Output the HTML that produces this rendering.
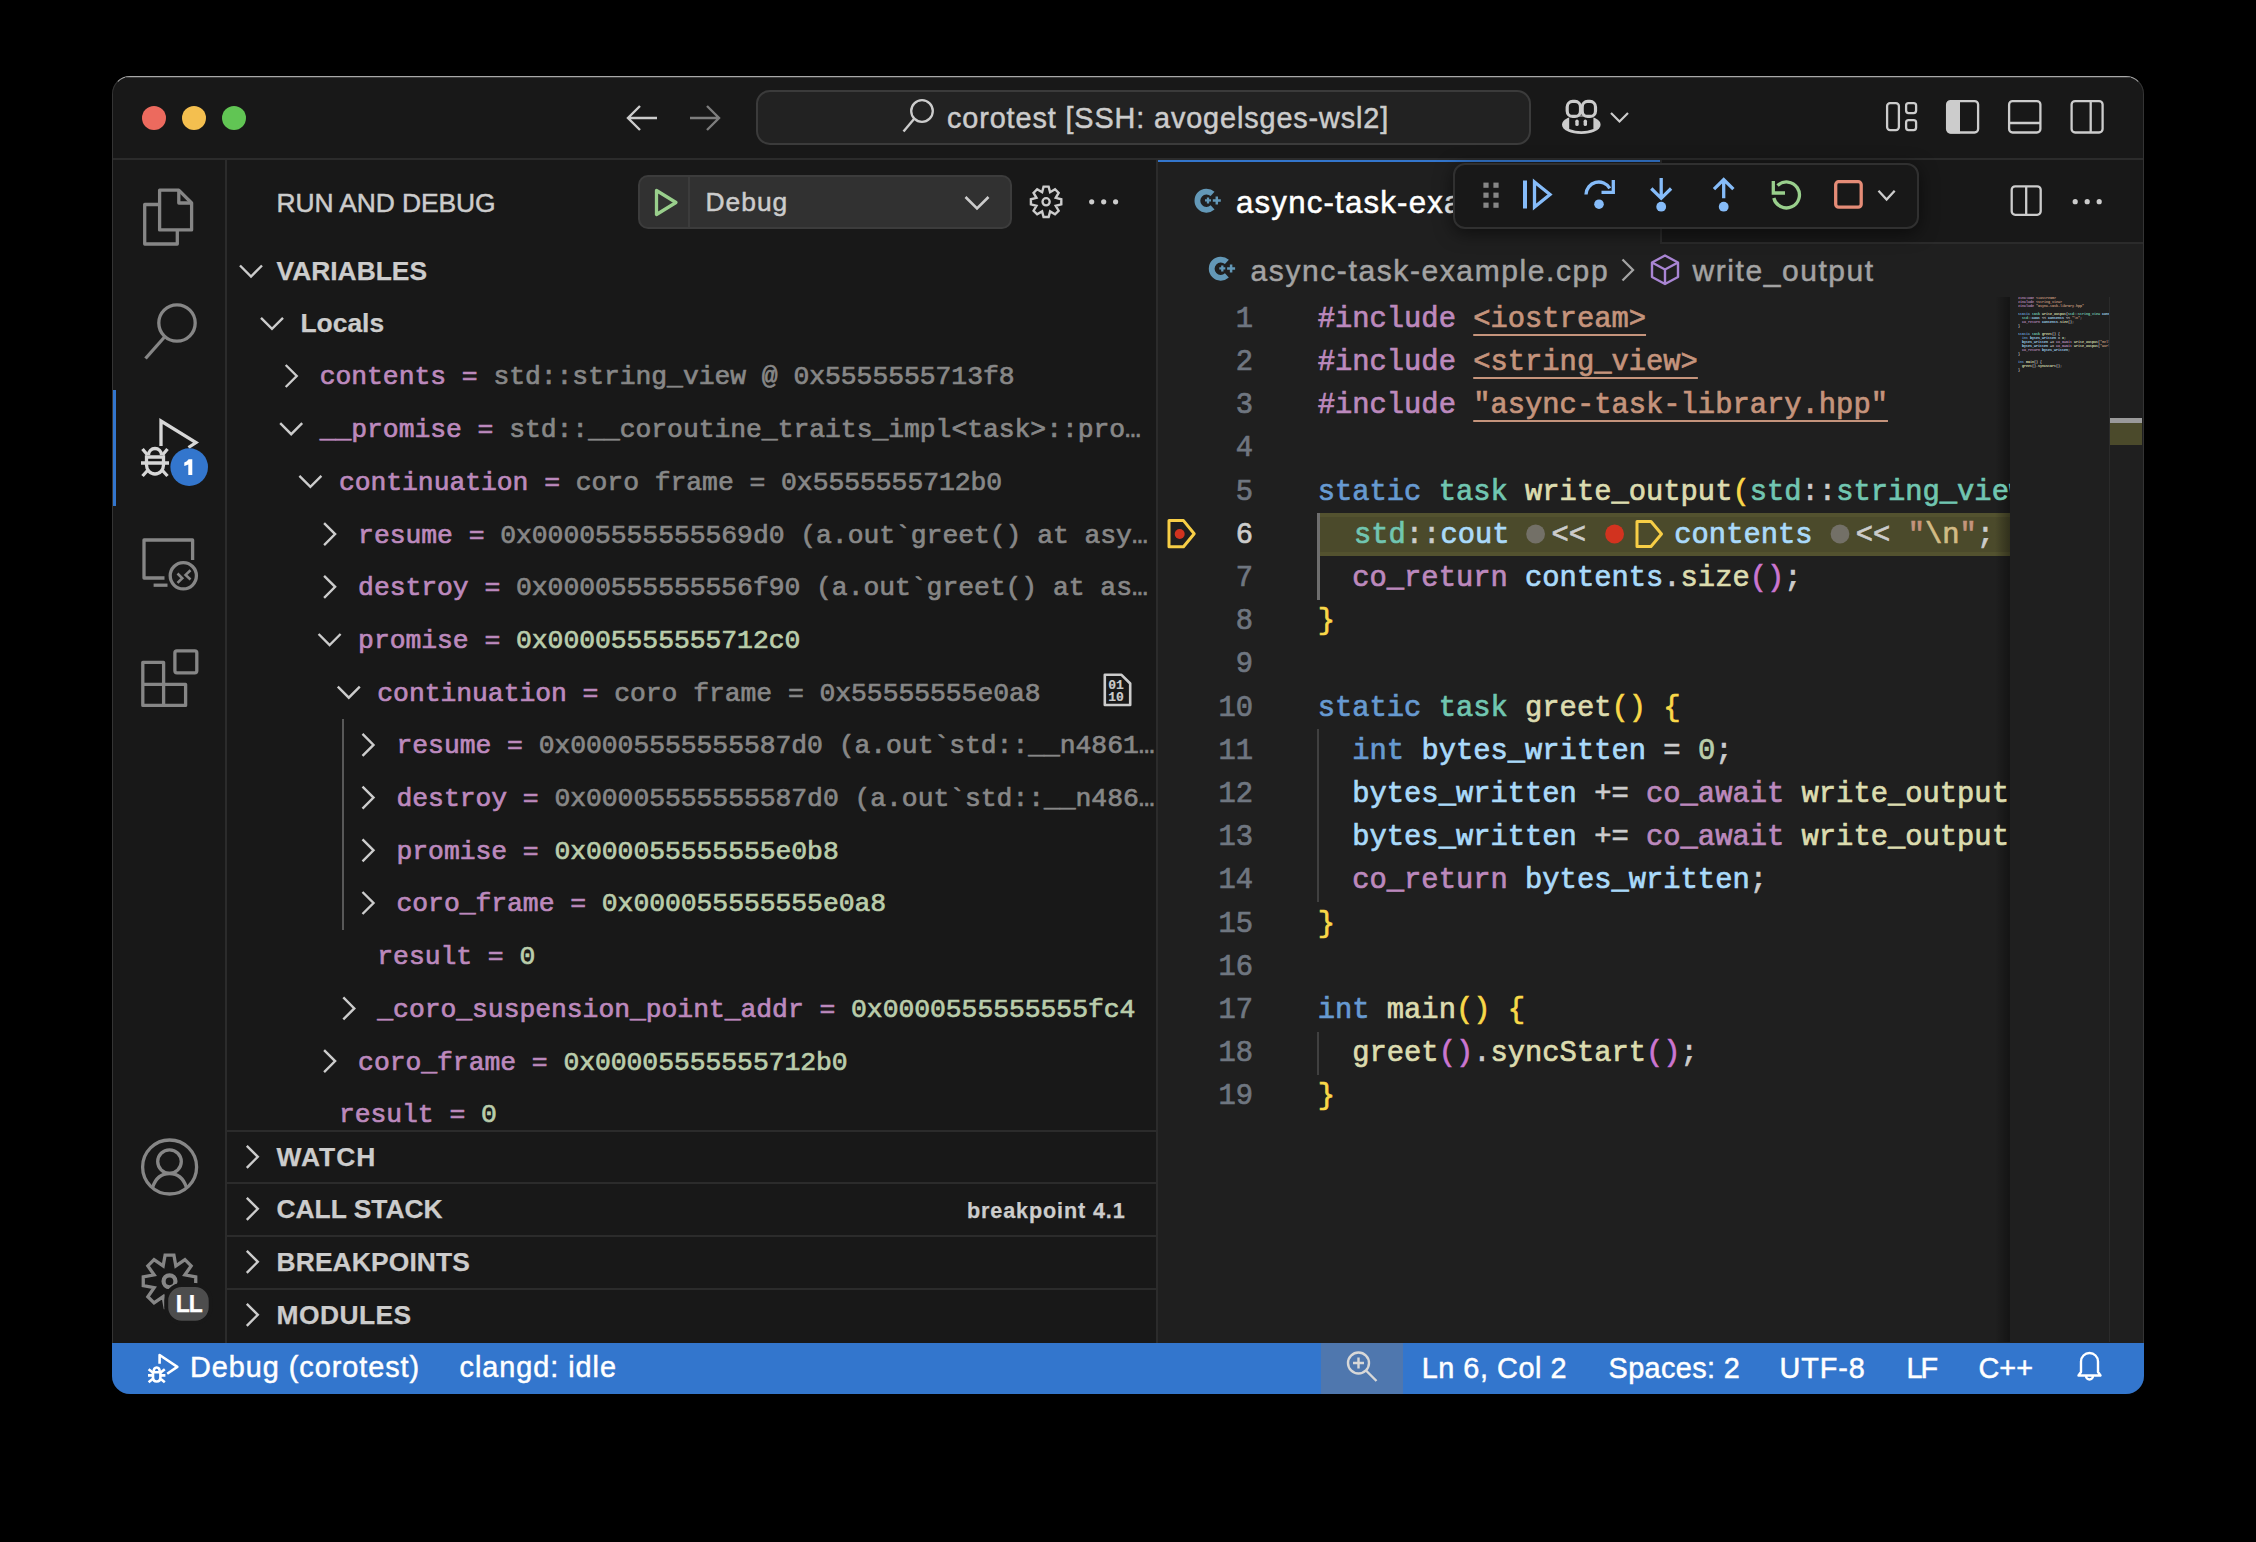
<!DOCTYPE html>
<html><head><meta charset="utf-8"><title>VS Code</title>
<style>html,body{margin:0;padding:0;background:#000;} body{width:2256px;height:1542px;position:relative;overflow:hidden;}</style></head>
<body>
<div style="position:absolute;left:0;top:0;width:2256px;height:1542px;clip-path:inset(76px 112px 148px 112px round 18px)">
<div style="position:absolute;left:112px;top:76px;width:2032px;height:1318px;background:#181818"></div><div style="position:absolute;left:112px;top:158px;width:2032px;height:2px;background:#2b2b2b"></div><div style="position:absolute;left:225px;top:160px;width:2px;height:1183px;background:#2b2b2b"></div><div style="position:absolute;left:1156px;top:160px;width:2px;height:1183px;background:#2b2b2b"></div><div style="position:absolute;left:755.5px;top:89.5px;width:771px;height:51px;background:#222222;border:2px solid #3b3b3b;border-radius:14px"></div><div style="position:absolute;left:112px;top:390px;width:4px;height:115.5px;background:#3376cd"></div><div style="position:absolute;left:638px;top:175px;width:370px;height:50px;background:#313131;border:2px solid #3c3c3c;border-radius:10px;box-sizing:content-box"></div><div style="position:absolute;left:688px;top:177px;width:2px;height:50px;background:#3c3c3c"></div><div style="position:absolute;left:341.8px;top:718.6px;width:2px;height:211.7px;background:#585858"></div><div style="position:absolute;left:227px;top:1130px;width:929px;height:2px;background:#2b2b2b"></div><div style="position:absolute;left:227px;top:1182px;width:929px;height:2px;background:#2b2b2b"></div><div style="position:absolute;left:227px;top:1235px;width:929px;height:2px;background:#2b2b2b"></div><div style="position:absolute;left:227px;top:1288px;width:929px;height:2px;background:#2b2b2b"></div><div style="position:absolute;left:1158px;top:160px;width:985px;height:1183px;background:#1f1f1f"></div><div style="position:absolute;left:1158px;top:160px;width:985px;height:83px;background:#181818"></div><div style="position:absolute;left:1662px;top:242px;width:481px;height:2px;background:#2b2b2b"></div><div style="position:absolute;left:1158px;top:160px;width:502px;height:84px;background:#1f1f1f"></div><div style="position:absolute;left:1158px;top:160px;width:502px;height:2px;background:#3376cd"></div><div style="position:absolute;left:1660px;top:160px;width:2px;height:84px;background:#2b2b2b"></div><div style="position:absolute;left:1317px;top:513.3px;width:693px;height:43.2px;background:#4b4a2b;box-shadow:inset 0 4px 0 #53522f, inset 0 -4px 0 #53522f"></div><div style="position:absolute;left:1317px;top:513.3px;width:3px;height:86.4px;background:#6e6e6e"></div><div style="position:absolute;left:1317px;top:729.3px;width:2px;height:172.8px;background:#404040"></div><div style="position:absolute;left:1317px;top:1031.7px;width:2px;height:43.2px;background:#404040"></div><div style="position:absolute;left:1995px;top:297px;width:15px;height:1045px;background:linear-gradient(to right, rgba(0,0,0,0), rgba(0,0,0,0.35))"></div><div style="position:absolute;left:2109px;top:297px;width:1px;height:1045px;background:#2b2b2b"></div><div style="position:absolute;left:2110px;top:418px;width:32px;height:4.5px;background:#9a9a9a"></div><div style="position:absolute;left:2110px;top:422.5px;width:32px;height:22.5px;background:#4b4a2b"></div><div style="position:absolute;left:112px;top:1342.5px;width:2032px;height:51.5px;background:#3376cd"></div><div style="position:absolute;left:1321px;top:1342.5px;width:82px;height:51.5px;background:#4f77ae"></div>
<div style="position:absolute;left:947px;top:99.92px;font-family:'Liberation Sans', sans-serif;font-size:28.8px;line-height:36.0px;font-weight:400;color:#cccccc;letter-spacing:0.89px;white-space:pre;-webkit-text-stroke:0.5px currentColor;">corotest [SSH: avogelsges-wsl2]</div><div style="position:absolute;left:276.5px;top:187.15px;font-family:'Liberation Sans', sans-serif;font-size:26.4px;line-height:33.0px;font-weight:400;color:#cccccc;letter-spacing:-0.08px;white-space:pre;-webkit-text-stroke:0.5px currentColor;">RUN AND DEBUG</div><div style="position:absolute;left:705.5px;top:186.15px;font-family:'Liberation Sans', sans-serif;font-size:26.4px;line-height:33.0px;font-weight:400;color:#cccccc;letter-spacing:1.0px;white-space:pre;-webkit-text-stroke:0.5px currentColor;">Debug</div><div style="position:absolute;left:276.5px;top:254.55px;font-family:'Liberation Sans', sans-serif;font-size:26.4px;line-height:33.0px;font-weight:700;color:#cccccc;letter-spacing:0px;white-space:pre;-webkit-text-stroke:0.25px currentColor;">VARIABLES</div><div style="position:absolute;left:300.5px;top:306.65px;font-family:'Liberation Sans', sans-serif;font-size:26.4px;line-height:33.0px;font-weight:700;color:#cccccc;letter-spacing:0px;white-space:pre;-webkit-text-stroke:0.25px currentColor;">Locals</div><div style="position:absolute;left:319.7px;top:361.47px;font-family:'Liberation Mono', monospace;font-size:26.4px;line-height:33.0px;font-weight:400;color:#cccccc;letter-spacing:-0.045px;white-space:pre;-webkit-text-stroke:0.7px currentColor;"><span style="color:#bc89bd">contents =</span> <span style="color:#878787">std::string_view @ 0x5555555713f8</span></div><div style="position:absolute;left:319.7px;top:414.17px;font-family:'Liberation Mono', monospace;font-size:26.4px;line-height:33.0px;font-weight:400;color:#cccccc;letter-spacing:-0.045px;white-space:pre;-webkit-text-stroke:0.7px currentColor;"><span style="color:#bc89bd">__promise =</span> <span style="color:#878787">std::__coroutine_traits_impl&lt;task&gt;::pro…</span></div><div style="position:absolute;left:338.9px;top:466.87px;font-family:'Liberation Mono', monospace;font-size:26.4px;line-height:33.0px;font-weight:400;color:#cccccc;letter-spacing:-0.045px;white-space:pre;-webkit-text-stroke:0.7px currentColor;"><span style="color:#bc89bd">continuation =</span> <span style="color:#878787">coro frame = 0x5555555712b0</span></div><div style="position:absolute;left:358.1px;top:519.57px;font-family:'Liberation Mono', monospace;font-size:26.4px;line-height:33.0px;font-weight:400;color:#cccccc;letter-spacing:-0.045px;white-space:pre;-webkit-text-stroke:0.7px currentColor;"><span style="color:#bc89bd">resume =</span> <span style="color:#878787">0x00005555555569d0 (a.out`greet() at asy…</span></div><div style="position:absolute;left:358.1px;top:572.27px;font-family:'Liberation Mono', monospace;font-size:26.4px;line-height:33.0px;font-weight:400;color:#cccccc;letter-spacing:-0.045px;white-space:pre;-webkit-text-stroke:0.7px currentColor;"><span style="color:#bc89bd">destroy =</span> <span style="color:#878787">0x0000555555556f90 (a.out`greet() at as…</span></div><div style="position:absolute;left:358.1px;top:624.97px;font-family:'Liberation Mono', monospace;font-size:26.4px;line-height:33.0px;font-weight:400;color:#cccccc;letter-spacing:-0.045px;white-space:pre;-webkit-text-stroke:0.7px currentColor;"><span style="color:#bc89bd">promise =</span> <span style="color:#bacdab">0x00005555555712c0</span></div><div style="position:absolute;left:377.3px;top:677.67px;font-family:'Liberation Mono', monospace;font-size:26.4px;line-height:33.0px;font-weight:400;color:#cccccc;letter-spacing:-0.045px;white-space:pre;-webkit-text-stroke:0.7px currentColor;"><span style="color:#bc89bd">continuation =</span> <span style="color:#878787">coro frame = 0x55555555e0a8</span></div><div style="position:absolute;left:396.5px;top:730.37px;font-family:'Liberation Mono', monospace;font-size:26.4px;line-height:33.0px;font-weight:400;color:#cccccc;letter-spacing:-0.045px;white-space:pre;-webkit-text-stroke:0.7px currentColor;"><span style="color:#bc89bd">resume =</span> <span style="color:#878787">0x00005555555587d0 (a.out`std::__n4861…</span></div><div style="position:absolute;left:396.5px;top:783.07px;font-family:'Liberation Mono', monospace;font-size:26.4px;line-height:33.0px;font-weight:400;color:#cccccc;letter-spacing:-0.045px;white-space:pre;-webkit-text-stroke:0.7px currentColor;"><span style="color:#bc89bd">destroy =</span> <span style="color:#878787">0x00005555555587d0 (a.out`std::__n486…</span></div><div style="position:absolute;left:396.5px;top:835.77px;font-family:'Liberation Mono', monospace;font-size:26.4px;line-height:33.0px;font-weight:400;color:#cccccc;letter-spacing:-0.045px;white-space:pre;-webkit-text-stroke:0.7px currentColor;"><span style="color:#bc89bd">promise =</span> <span style="color:#bacdab">0x000055555555e0b8</span></div><div style="position:absolute;left:396.5px;top:888.47px;font-family:'Liberation Mono', monospace;font-size:26.4px;line-height:33.0px;font-weight:400;color:#cccccc;letter-spacing:-0.045px;white-space:pre;-webkit-text-stroke:0.7px currentColor;"><span style="color:#bc89bd">coro_frame =</span> <span style="color:#bacdab">0x000055555555e0a8</span></div><div style="position:absolute;left:377.3px;top:941.17px;font-family:'Liberation Mono', monospace;font-size:26.4px;line-height:33.0px;font-weight:400;color:#cccccc;letter-spacing:-0.045px;white-space:pre;-webkit-text-stroke:0.7px currentColor;"><span style="color:#bc89bd">result =</span> <span style="color:#bacdab">0</span></div><div style="position:absolute;left:377.3px;top:993.87px;font-family:'Liberation Mono', monospace;font-size:26.4px;line-height:33.0px;font-weight:400;color:#cccccc;letter-spacing:-0.045px;white-space:pre;-webkit-text-stroke:0.7px currentColor;"><span style="color:#bc89bd">_coro_suspension_point_addr =</span> <span style="color:#bacdab">0x0000555555555fc4</span></div><div style="position:absolute;left:358.1px;top:1046.57px;font-family:'Liberation Mono', monospace;font-size:26.4px;line-height:33.0px;font-weight:400;color:#cccccc;letter-spacing:-0.045px;white-space:pre;-webkit-text-stroke:0.7px currentColor;"><span style="color:#bc89bd">coro_frame =</span> <span style="color:#bacdab">0x00005555555712b0</span></div><div style="position:absolute;left:338.9px;top:1099.27px;font-family:'Liberation Mono', monospace;font-size:26.4px;line-height:33.0px;font-weight:400;color:#cccccc;letter-spacing:-0.045px;white-space:pre;-webkit-text-stroke:0.7px currentColor;"><span style="color:#bc89bd">result =</span> <span style="color:#bacdab">0</span></div><div style="position:absolute;left:1108.3px;top:678.02px;font-family:'Liberation Mono', monospace;font-size:13px;line-height:16.25px;font-weight:700;color:#cccccc;letter-spacing:0px;white-space:pre;-webkit-text-stroke:0.2px currentColor;">01</div><div style="position:absolute;left:1108.3px;top:690.12px;font-family:'Liberation Mono', monospace;font-size:13px;line-height:16.25px;font-weight:700;color:#cccccc;letter-spacing:0px;white-space:pre;-webkit-text-stroke:0.2px currentColor;">10</div><div style="position:absolute;left:276.5px;top:1141.35px;font-family:'Liberation Sans', sans-serif;font-size:26.4px;line-height:33.0px;font-weight:700;color:#cccccc;letter-spacing:1.0px;white-space:pre;-webkit-text-stroke:0.25px currentColor;">WATCH</div><div style="position:absolute;left:276.5px;top:1193.35px;font-family:'Liberation Sans', sans-serif;font-size:26.4px;line-height:33.0px;font-weight:700;color:#cccccc;letter-spacing:0px;white-space:pre;-webkit-text-stroke:0.25px currentColor;">CALL STACK</div><div style="position:absolute;left:276.5px;top:1246.35px;font-family:'Liberation Sans', sans-serif;font-size:26.4px;line-height:33.0px;font-weight:700;color:#cccccc;letter-spacing:0.13px;white-space:pre;-webkit-text-stroke:0.25px currentColor;">BREAKPOINTS</div><div style="position:absolute;left:276.5px;top:1299.35px;font-family:'Liberation Sans', sans-serif;font-size:26.4px;line-height:33.0px;font-weight:700;color:#cccccc;letter-spacing:0.45px;white-space:pre;-webkit-text-stroke:0.25px currentColor;">MODULES</div><div style="position:absolute;left:967px;top:1196.81px;font-family:'Liberation Sans', sans-serif;font-size:21.6px;line-height:27.0px;font-weight:700;color:#cccccc;letter-spacing:0.87px;white-space:pre;-webkit-text-stroke:0.25px currentColor;">breakpoint 4.1</div><div style="position:absolute;left:1236px;top:182.88px;font-family:'Liberation Sans', sans-serif;font-size:31.2px;line-height:39.0px;font-weight:400;color:#ffffff;letter-spacing:1.2px;white-space:pre;-webkit-text-stroke:0.5px currentColor;">async-task-example.cpp</div><div style="position:absolute;left:1250.5px;top:251.55px;font-family:'Liberation Sans', sans-serif;font-size:30px;line-height:37.5px;font-weight:400;color:#a3a3a3;letter-spacing:1.6px;white-space:pre;-webkit-text-stroke:0.5px currentColor;">async-task-example.cpp</div><div style="position:absolute;left:1692.6px;top:251.55px;font-family:'Liberation Sans', sans-serif;font-size:30px;line-height:37.5px;font-weight:400;color:#a3a3a3;letter-spacing:1.55px;white-space:pre;-webkit-text-stroke:0.5px currentColor;">write_output</div><div style="position:absolute;left:1235.72px;top:301.74px;font-family:'Liberation Mono', monospace;font-size:28.8px;line-height:36.0px;font-weight:400;color:#6f7680;letter-spacing:0px;white-space:pre;-webkit-text-stroke:0.7px currentColor;">1</div><div style="position:absolute;left:1235.72px;top:344.94px;font-family:'Liberation Mono', monospace;font-size:28.8px;line-height:36.0px;font-weight:400;color:#6f7680;letter-spacing:0px;white-space:pre;-webkit-text-stroke:0.7px currentColor;">2</div><div style="position:absolute;left:1235.72px;top:388.14px;font-family:'Liberation Mono', monospace;font-size:28.8px;line-height:36.0px;font-weight:400;color:#6f7680;letter-spacing:0px;white-space:pre;-webkit-text-stroke:0.7px currentColor;">3</div><div style="position:absolute;left:1235.72px;top:431.34px;font-family:'Liberation Mono', monospace;font-size:28.8px;line-height:36.0px;font-weight:400;color:#6f7680;letter-spacing:0px;white-space:pre;-webkit-text-stroke:0.7px currentColor;">4</div><div style="position:absolute;left:1235.72px;top:474.54px;font-family:'Liberation Mono', monospace;font-size:28.8px;line-height:36.0px;font-weight:400;color:#6f7680;letter-spacing:0px;white-space:pre;-webkit-text-stroke:0.7px currentColor;">5</div><div style="position:absolute;left:1235.72px;top:517.74px;font-family:'Liberation Mono', monospace;font-size:28.8px;line-height:36.0px;font-weight:400;color:#cccccc;letter-spacing:0px;white-space:pre;-webkit-text-stroke:0.7px currentColor;">6</div><div style="position:absolute;left:1235.72px;top:560.94px;font-family:'Liberation Mono', monospace;font-size:28.8px;line-height:36.0px;font-weight:400;color:#6f7680;letter-spacing:0px;white-space:pre;-webkit-text-stroke:0.7px currentColor;">7</div><div style="position:absolute;left:1235.72px;top:604.14px;font-family:'Liberation Mono', monospace;font-size:28.8px;line-height:36.0px;font-weight:400;color:#6f7680;letter-spacing:0px;white-space:pre;-webkit-text-stroke:0.7px currentColor;">8</div><div style="position:absolute;left:1235.72px;top:647.34px;font-family:'Liberation Mono', monospace;font-size:28.8px;line-height:36.0px;font-weight:400;color:#6f7680;letter-spacing:0px;white-space:pre;-webkit-text-stroke:0.7px currentColor;">9</div><div style="position:absolute;left:1218.44px;top:690.54px;font-family:'Liberation Mono', monospace;font-size:28.8px;line-height:36.0px;font-weight:400;color:#6f7680;letter-spacing:0px;white-space:pre;-webkit-text-stroke:0.7px currentColor;">10</div><div style="position:absolute;left:1218.44px;top:733.74px;font-family:'Liberation Mono', monospace;font-size:28.8px;line-height:36.0px;font-weight:400;color:#6f7680;letter-spacing:0px;white-space:pre;-webkit-text-stroke:0.7px currentColor;">11</div><div style="position:absolute;left:1218.44px;top:776.94px;font-family:'Liberation Mono', monospace;font-size:28.8px;line-height:36.0px;font-weight:400;color:#6f7680;letter-spacing:0px;white-space:pre;-webkit-text-stroke:0.7px currentColor;">12</div><div style="position:absolute;left:1218.44px;top:820.14px;font-family:'Liberation Mono', monospace;font-size:28.8px;line-height:36.0px;font-weight:400;color:#6f7680;letter-spacing:0px;white-space:pre;-webkit-text-stroke:0.7px currentColor;">13</div><div style="position:absolute;left:1218.44px;top:863.34px;font-family:'Liberation Mono', monospace;font-size:28.8px;line-height:36.0px;font-weight:400;color:#6f7680;letter-spacing:0px;white-space:pre;-webkit-text-stroke:0.7px currentColor;">14</div><div style="position:absolute;left:1218.44px;top:906.54px;font-family:'Liberation Mono', monospace;font-size:28.8px;line-height:36.0px;font-weight:400;color:#6f7680;letter-spacing:0px;white-space:pre;-webkit-text-stroke:0.7px currentColor;">15</div><div style="position:absolute;left:1218.44px;top:949.74px;font-family:'Liberation Mono', monospace;font-size:28.8px;line-height:36.0px;font-weight:400;color:#6f7680;letter-spacing:0px;white-space:pre;-webkit-text-stroke:0.7px currentColor;">16</div><div style="position:absolute;left:1218.44px;top:992.94px;font-family:'Liberation Mono', monospace;font-size:28.8px;line-height:36.0px;font-weight:400;color:#6f7680;letter-spacing:0px;white-space:pre;-webkit-text-stroke:0.7px currentColor;">17</div><div style="position:absolute;left:1218.44px;top:1036.14px;font-family:'Liberation Mono', monospace;font-size:28.8px;line-height:36.0px;font-weight:400;color:#6f7680;letter-spacing:0px;white-space:pre;-webkit-text-stroke:0.7px currentColor;">18</div><div style="position:absolute;left:1218.44px;top:1079.34px;font-family:'Liberation Mono', monospace;font-size:28.8px;line-height:36.0px;font-weight:400;color:#6f7680;letter-spacing:0px;white-space:pre;-webkit-text-stroke:0.7px currentColor;">19</div><div style="position:absolute;left:1158px;top:297px;width:852px;height:1045px;overflow:hidden"><div style="position:absolute;left:-1158px;top:-297px;width:2256px;height:1542px"><div style="position:absolute;left:1317.7px;top:301.74px;font-family:'Liberation Mono', monospace;font-size:28.8px;line-height:36.0px;font-weight:400;color:#cccccc;letter-spacing:0px;white-space:pre;-webkit-text-stroke:0.7px currentColor;"><span style="color:#bc89bd;">#include</span><span style="color:#cccccc;"> </span><span style="color:#c5947c;text-decoration:underline;text-underline-offset:7px;text-decoration-thickness:2px;">&lt;iostream&gt;</span></div><div style="position:absolute;left:1317.7px;top:344.94px;font-family:'Liberation Mono', monospace;font-size:28.8px;line-height:36.0px;font-weight:400;color:#cccccc;letter-spacing:0px;white-space:pre;-webkit-text-stroke:0.7px currentColor;"><span style="color:#bc89bd;">#include</span><span style="color:#cccccc;"> </span><span style="color:#c5947c;text-decoration:underline;text-underline-offset:7px;text-decoration-thickness:2px;">&lt;string_view&gt;</span></div><div style="position:absolute;left:1317.7px;top:388.14px;font-family:'Liberation Mono', monospace;font-size:28.8px;line-height:36.0px;font-weight:400;color:#cccccc;letter-spacing:0px;white-space:pre;-webkit-text-stroke:0.7px currentColor;"><span style="color:#bc89bd;">#include</span><span style="color:#cccccc;"> </span><span style="color:#c5947c;text-decoration:underline;text-underline-offset:7px;text-decoration-thickness:2px;">&quot;async-task-library.hpp&quot;</span></div><div style="position:absolute;left:1317.7px;top:474.54px;font-family:'Liberation Mono', monospace;font-size:28.8px;line-height:36.0px;font-weight:400;color:#cccccc;letter-spacing:0px;white-space:pre;-webkit-text-stroke:0.7px currentColor;"><span style="color:#679ad1;">static</span><span style="color:#cccccc;"> </span><span style="color:#71c6b1;">task</span><span style="color:#cccccc;"> </span><span style="color:#dcdcaf;">write_output</span><span style="color:#f9d849;">(</span><span style="color:#71c6b1;">std</span><span style="color:#cccccc;">::</span><span style="color:#71c6b1;">string_view</span><span style="color:#cccccc;"> </span><span style="color:#aadafa;">contents</span><span style="color:#f9d849;">)</span><span style="color:#cccccc;"> </span><span style="color:#f9d849;">{</span></div><div style="position:absolute;left:1317.7px;top:560.94px;font-family:'Liberation Mono', monospace;font-size:28.8px;line-height:36.0px;font-weight:400;color:#cccccc;letter-spacing:0px;white-space:pre;-webkit-text-stroke:0.7px currentColor;"><span style="color:#cccccc;">  </span><span style="color:#bc89bd;">co_return</span><span style="color:#cccccc;"> </span><span style="color:#aadafa;">contents</span><span style="color:#cccccc;">.</span><span style="color:#dcdcaf;">size</span><span style="color:#cc76d1;">()</span><span style="color:#cccccc;">;</span></div><div style="position:absolute;left:1317.7px;top:604.14px;font-family:'Liberation Mono', monospace;font-size:28.8px;line-height:36.0px;font-weight:400;color:#cccccc;letter-spacing:0px;white-space:pre;-webkit-text-stroke:0.7px currentColor;"><span style="color:#f9d849;">}</span></div><div style="position:absolute;left:1317.7px;top:690.54px;font-family:'Liberation Mono', monospace;font-size:28.8px;line-height:36.0px;font-weight:400;color:#cccccc;letter-spacing:0px;white-space:pre;-webkit-text-stroke:0.7px currentColor;"><span style="color:#679ad1;">static</span><span style="color:#cccccc;"> </span><span style="color:#71c6b1;">task</span><span style="color:#cccccc;"> </span><span style="color:#dcdcaf;">greet</span><span style="color:#f9d849;">()</span><span style="color:#cccccc;"> </span><span style="color:#f9d849;">{</span></div><div style="position:absolute;left:1317.7px;top:733.74px;font-family:'Liberation Mono', monospace;font-size:28.8px;line-height:36.0px;font-weight:400;color:#cccccc;letter-spacing:0px;white-space:pre;-webkit-text-stroke:0.7px currentColor;"><span style="color:#cccccc;">  </span><span style="color:#679ad1;">int</span><span style="color:#cccccc;"> </span><span style="color:#aadafa;">bytes_written</span><span style="color:#cccccc;"> = </span><span style="color:#bacdab;">0</span><span style="color:#cccccc;">;</span></div><div style="position:absolute;left:1317.7px;top:776.94px;font-family:'Liberation Mono', monospace;font-size:28.8px;line-height:36.0px;font-weight:400;color:#cccccc;letter-spacing:0px;white-space:pre;-webkit-text-stroke:0.7px currentColor;"><span style="color:#cccccc;">  </span><span style="color:#aadafa;">bytes_written</span><span style="color:#cccccc;"> += </span><span style="color:#bc89bd;">co_await</span><span style="color:#cccccc;"> </span><span style="color:#dcdcaf;">write_output</span><span style="color:#cc76d1;">(</span><span style="color:#c5947c;">&quot;Hello &quot;</span><span style="color:#cc76d1;">)</span><span style="color:#cccccc;">;</span></div><div style="position:absolute;left:1317.7px;top:820.14px;font-family:'Liberation Mono', monospace;font-size:28.8px;line-height:36.0px;font-weight:400;color:#cccccc;letter-spacing:0px;white-space:pre;-webkit-text-stroke:0.7px currentColor;"><span style="color:#cccccc;">  </span><span style="color:#aadafa;">bytes_written</span><span style="color:#cccccc;"> += </span><span style="color:#bc89bd;">co_await</span><span style="color:#cccccc;"> </span><span style="color:#dcdcaf;">write_output</span><span style="color:#cc76d1;">(</span><span style="color:#c5947c;">&quot;World&quot;</span><span style="color:#cc76d1;">)</span><span style="color:#cccccc;">;</span></div><div style="position:absolute;left:1317.7px;top:863.34px;font-family:'Liberation Mono', monospace;font-size:28.8px;line-height:36.0px;font-weight:400;color:#cccccc;letter-spacing:0px;white-space:pre;-webkit-text-stroke:0.7px currentColor;"><span style="color:#cccccc;">  </span><span style="color:#bc89bd;">co_return</span><span style="color:#cccccc;"> </span><span style="color:#aadafa;">bytes_written</span><span style="color:#cccccc;">;</span></div><div style="position:absolute;left:1317.7px;top:906.54px;font-family:'Liberation Mono', monospace;font-size:28.8px;line-height:36.0px;font-weight:400;color:#cccccc;letter-spacing:0px;white-space:pre;-webkit-text-stroke:0.7px currentColor;"><span style="color:#f9d849;">}</span></div><div style="position:absolute;left:1317.7px;top:992.94px;font-family:'Liberation Mono', monospace;font-size:28.8px;line-height:36.0px;font-weight:400;color:#cccccc;letter-spacing:0px;white-space:pre;-webkit-text-stroke:0.7px currentColor;"><span style="color:#679ad1;">int</span><span style="color:#cccccc;"> </span><span style="color:#dcdcaf;">main</span><span style="color:#f9d849;">()</span><span style="color:#cccccc;"> </span><span style="color:#f9d849;">{</span></div><div style="position:absolute;left:1317.7px;top:1036.14px;font-family:'Liberation Mono', monospace;font-size:28.8px;line-height:36.0px;font-weight:400;color:#cccccc;letter-spacing:0px;white-space:pre;-webkit-text-stroke:0.7px currentColor;"><span style="color:#cccccc;">  </span><span style="color:#dcdcaf;">greet</span><span style="color:#cc76d1;">()</span><span style="color:#cccccc;">.</span><span style="color:#dcdcaf;">syncStart</span><span style="color:#cc76d1;">()</span><span style="color:#cccccc;">;</span></div><div style="position:absolute;left:1317.7px;top:1079.34px;font-family:'Liberation Mono', monospace;font-size:28.8px;line-height:36.0px;font-weight:400;color:#cccccc;letter-spacing:0px;white-space:pre;-webkit-text-stroke:0.7px currentColor;"><span style="color:#f9d849;">}</span></div><div style="position:absolute;left:1354px;top:517.74px;font-family:'Liberation Mono', monospace;font-size:28.8px;line-height:36.0px;font-weight:400;color:#cccccc;letter-spacing:0px;white-space:pre;-webkit-text-stroke:0.7px currentColor;"><span style="color:#71c6b1;">std</span><span style="color:#cccccc;">::</span><span style="color:#aadafa;">cout</span></div><div style="position:absolute;left:1551.5px;top:517.74px;font-family:'Liberation Mono', monospace;font-size:28.8px;line-height:36.0px;font-weight:400;color:#cccccc;letter-spacing:0px;white-space:pre;-webkit-text-stroke:0.7px currentColor;"><span style="color:#cccccc;">&lt;&lt;</span></div><div style="position:absolute;left:1674.3px;top:517.74px;font-family:'Liberation Mono', monospace;font-size:28.8px;line-height:36.0px;font-weight:400;color:#cccccc;letter-spacing:0px;white-space:pre;-webkit-text-stroke:0.7px currentColor;"><span style="color:#aadafa;">contents</span></div><div style="position:absolute;left:1855.8px;top:517.74px;font-family:'Liberation Mono', monospace;font-size:28.8px;line-height:36.0px;font-weight:400;color:#cccccc;letter-spacing:0px;white-space:pre;-webkit-text-stroke:0.7px currentColor;"><span style="color:#cccccc;">&lt;&lt;</span><span style="color:#cccccc;"> </span><span style="color:#c5947c;">&quot;</span><span style="color:#d2bb85;">\n</span><span style="color:#c5947c;">&quot;</span><span style="color:#cccccc;">;</span></div></div></div><div style="position:absolute;left:2010px;top:297px;width:99px;height:1045px;overflow:hidden"><div style="position:absolute;left:7.6px;top:-0.7px;transform-origin:0 0;transform:scale(0.1157,0.0926);font-family:'Liberation Mono', monospace;font-size:28.8px;line-height:43.2px;font-weight:700;width:3000px"><div style="height:43.2px;white-space:pre"><span style="color:#bc89bd;">#include</span><span style="color:#cccccc;"> </span><span style="color:#c5947c;">&lt;iostream&gt;</span></div><div style="height:43.2px;white-space:pre"><span style="color:#bc89bd;">#include</span><span style="color:#cccccc;"> </span><span style="color:#c5947c;">&lt;string_view&gt;</span></div><div style="height:43.2px;white-space:pre"><span style="color:#bc89bd;">#include</span><span style="color:#cccccc;"> </span><span style="color:#c5947c;">&quot;async-task-library.hpp&quot;</span></div><div style="height:43.2px;white-space:pre">&nbsp;</div><div style="height:43.2px;white-space:pre"><span style="color:#679ad1;">static</span><span style="color:#cccccc;"> </span><span style="color:#71c6b1;">task</span><span style="color:#cccccc;"> </span><span style="color:#dcdcaf;">write_output</span><span style="color:#cccccc;">(</span><span style="color:#71c6b1;">std</span><span style="color:#cccccc;">::</span><span style="color:#71c6b1;">string_view</span><span style="color:#cccccc;"> </span><span style="color:#aadafa;">contents</span><span style="color:#cccccc;">)</span><span style="color:#cccccc;"> </span><span style="color:#cccccc;">{</span></div><div style="height:43.2px;white-space:pre"><span style="color:#cccccc;">  </span><span style="color:#71c6b1;">std</span><span style="color:#cccccc;">::</span><span style="color:#aadafa;">cout</span><span style="color:#cccccc;"> &lt;&lt; </span><span style="color:#aadafa;">contents</span><span style="color:#cccccc;"> &lt;&lt; </span><span style="color:#c5947c;">&quot;\n&quot;</span><span style="color:#cccccc;">;</span></div><div style="height:43.2px;white-space:pre"><span style="color:#cccccc;">  </span><span style="color:#bc89bd;">co_return</span><span style="color:#cccccc;"> </span><span style="color:#aadafa;">contents</span><span style="color:#cccccc;">.</span><span style="color:#dcdcaf;">size</span><span style="color:#cccccc;">()</span><span style="color:#cccccc;">;</span></div><div style="height:43.2px;white-space:pre"><span style="color:#cccccc;">}</span></div><div style="height:43.2px;white-space:pre">&nbsp;</div><div style="height:43.2px;white-space:pre"><span style="color:#679ad1;">static</span><span style="color:#cccccc;"> </span><span style="color:#71c6b1;">task</span><span style="color:#cccccc;"> </span><span style="color:#dcdcaf;">greet</span><span style="color:#cccccc;">()</span><span style="color:#cccccc;"> </span><span style="color:#cccccc;">{</span></div><div style="height:43.2px;white-space:pre"><span style="color:#cccccc;">  </span><span style="color:#679ad1;">int</span><span style="color:#cccccc;"> </span><span style="color:#aadafa;">bytes_written</span><span style="color:#cccccc;"> = </span><span style="color:#bacdab;">0</span><span style="color:#cccccc;">;</span></div><div style="height:43.2px;white-space:pre"><span style="color:#cccccc;">  </span><span style="color:#aadafa;">bytes_written</span><span style="color:#cccccc;"> += </span><span style="color:#bc89bd;">co_await</span><span style="color:#cccccc;"> </span><span style="color:#dcdcaf;">write_output</span><span style="color:#cccccc;">(</span><span style="color:#c5947c;">&quot;Hello &quot;</span><span style="color:#cccccc;">)</span><span style="color:#cccccc;">;</span></div><div style="height:43.2px;white-space:pre"><span style="color:#cccccc;">  </span><span style="color:#aadafa;">bytes_written</span><span style="color:#cccccc;"> += </span><span style="color:#bc89bd;">co_await</span><span style="color:#cccccc;"> </span><span style="color:#dcdcaf;">write_output</span><span style="color:#cccccc;">(</span><span style="color:#c5947c;">&quot;World&quot;</span><span style="color:#cccccc;">)</span><span style="color:#cccccc;">;</span></div><div style="height:43.2px;white-space:pre"><span style="color:#cccccc;">  </span><span style="color:#bc89bd;">co_return</span><span style="color:#cccccc;"> </span><span style="color:#aadafa;">bytes_written</span><span style="color:#cccccc;">;</span></div><div style="height:43.2px;white-space:pre"><span style="color:#cccccc;">}</span></div><div style="height:43.2px;white-space:pre">&nbsp;</div><div style="height:43.2px;white-space:pre"><span style="color:#679ad1;">int</span><span style="color:#cccccc;"> </span><span style="color:#dcdcaf;">main</span><span style="color:#cccccc;">()</span><span style="color:#cccccc;"> </span><span style="color:#cccccc;">{</span></div><div style="height:43.2px;white-space:pre"><span style="color:#cccccc;">  </span><span style="color:#dcdcaf;">greet</span><span style="color:#cccccc;">()</span><span style="color:#cccccc;">.</span><span style="color:#dcdcaf;">syncStart</span><span style="color:#cccccc;">()</span><span style="color:#cccccc;">;</span></div><div style="height:43.2px;white-space:pre"><span style="color:#cccccc;">}</span></div></div></div><div style="position:absolute;left:190px;top:1349.22px;font-family:'Liberation Sans', sans-serif;font-size:28.8px;line-height:36.0px;font-weight:400;color:#ffffff;letter-spacing:0.98px;white-space:pre;-webkit-text-stroke:0.5px currentColor;">Debug (corotest)</div><div style="position:absolute;left:459.6px;top:1349.22px;font-family:'Liberation Sans', sans-serif;font-size:28.8px;line-height:36.0px;font-weight:400;color:#ffffff;letter-spacing:0.97px;white-space:pre;-webkit-text-stroke:0.5px currentColor;">clangd: idle</div><div style="position:absolute;left:1421.7px;top:1350.12px;font-family:'Liberation Sans', sans-serif;font-size:28.8px;line-height:36.0px;font-weight:400;color:#ffffff;letter-spacing:0.55px;white-space:pre;-webkit-text-stroke:0.5px currentColor;">Ln 6, Col 2</div><div style="position:absolute;left:1608.6px;top:1350.12px;font-family:'Liberation Sans', sans-serif;font-size:28.8px;line-height:36.0px;font-weight:400;color:#ffffff;letter-spacing:0.39px;white-space:pre;-webkit-text-stroke:0.5px currentColor;">Spaces: 2</div><div style="position:absolute;left:1779.6px;top:1350.12px;font-family:'Liberation Sans', sans-serif;font-size:28.8px;line-height:36.0px;font-weight:400;color:#ffffff;letter-spacing:0.9px;white-space:pre;-webkit-text-stroke:0.5px currentColor;">UTF-8</div><div style="position:absolute;left:1906.4px;top:1350.12px;font-family:'Liberation Sans', sans-serif;font-size:28.8px;line-height:36.0px;font-weight:400;color:#ffffff;letter-spacing:-2.0px;white-space:pre;-webkit-text-stroke:0.5px currentColor;">LF</div><div style="position:absolute;left:1978.4px;top:1350.12px;font-family:'Liberation Sans', sans-serif;font-size:28.8px;line-height:36.0px;font-weight:400;color:#ffffff;letter-spacing:0.07px;white-space:pre;-webkit-text-stroke:0.5px currentColor;">C++</div>
<svg style="position:absolute;left:0;top:0" width="2256" height="1542" viewBox="0 0 2256 1542"><circle cx="154" cy="118" r="12" fill="#ec6a5e"/><circle cx="194" cy="118" r="12" fill="#f4bf4f"/><circle cx="234" cy="118" r="12" fill="#61c554"/><path d="M657,118 H628 M640,106 L628,118 L640,130" stroke="#cccccc" stroke-width="2.4" fill="none"/><path d="M690,118 H719 M707,106 L719,118 L707,130" stroke="#7d7d7d" stroke-width="2.4" fill="none"/><circle cx="922" cy="111" r="10.8" stroke="#cccccc" stroke-width="2.3" fill="none"/><path d="M914,119 L903.5,131.5" stroke="#cccccc" stroke-width="2.4" fill="none"/><ellipse cx="1581.3" cy="124.7" rx="19.3" ry="9.3" fill="#cccccc"/><path d="M1569.2,116.5 H1593.4 V129 Q1581.3,133.5 1569.2,129 Z" fill="#181818"/><rect x="1567.2" y="101.4" width="13.3" height="15" rx="5.5" fill="#181818" stroke="#cccccc" stroke-width="3.2"/><rect x="1582.2" y="101.4" width="13.3" height="15" rx="5.5" fill="#181818" stroke="#cccccc" stroke-width="3.2"/><rect x="1575.3" y="119.5" width="3.4" height="6.6" rx="1.7" fill="#cccccc"/><rect x="1583.6" y="119.5" width="3.4" height="6.6" rx="1.7" fill="#cccccc"/><path d="M1611,113 L1619.5,121.5 L1628,113" stroke="#cccccc" stroke-width="2.2" fill="none"/><rect x="1887.1" y="103.1" width="11.8" height="27" rx="3" stroke="#cccccc" stroke-width="2.3" fill="none"/><rect x="1906.1" y="103.1" width="10" height="10" rx="2.5" stroke="#cccccc" stroke-width="2.3" fill="none"/><rect x="1906.1" y="120.1" width="10" height="10" rx="2.5" stroke="#cccccc" stroke-width="2.3" fill="none"/><rect x="1947.1" y="101.1" width="31" height="31.4" rx="3.5" stroke="#cccccc" stroke-width="2.3" fill="none"/><path d="M1947,104.5 a3.5,3.5 0 0 1 3.5,-3.5 H1960 V133.6 H1950.5 a3.5,3.5 0 0 1 -3.5,-3.5 Z" fill="#cccccc"/><rect x="2009.1" y="101.1" width="31.3" height="31.4" rx="3.5" stroke="#cccccc" stroke-width="2.3" fill="none"/><path d="M2009,123 H2041" stroke="#cccccc" stroke-width="2.3" fill="none"/><rect x="2071.6" y="101.1" width="31" height="31.4" rx="3.5" stroke="#cccccc" stroke-width="2.3" fill="none"/><path d="M2090.7,101 V133" stroke="#cccccc" stroke-width="2.3" fill="none"/><path d="M159.6,190.2 H178.8 L191.6,203 V229.9 H159.6 Z" stroke="#868686" stroke-width="3.3" fill="none" stroke-linejoin="round"/><path d="M178.8,190.2 V203 H191.6" stroke="#868686" stroke-width="3.3" fill="none" stroke-linejoin="round"/><path d="M159.6,204.5 H144.7 V244 H177.3 V229.9" stroke="#868686" stroke-width="3.3" fill="none" stroke-linejoin="round"/><circle cx="177" cy="323" r="18.2" stroke="#868686" stroke-width="3.3" fill="none" stroke-linejoin="round"/><path d="M165,336.5 L145.5,358.5" stroke="#868686" stroke-width="3.3" fill="none" stroke-linejoin="round"/><path d="M161,446 V421 L196,442.5 L188.5,447.5" stroke="#d7d7d7" stroke-width="3.3" fill="none" stroke-linejoin="miter"/><g stroke="#d7d7d7" stroke-width="3.3" fill="none"><path d="M148.5,455 a6.5,6.5 0 0 1 13,0"/><path d="M146.5,457 H163.5 V465 a8.5,9 0 0 1 -17,0 Z"/><path d="M141,463 H169 M142.5,449 L147.5,455 M167.5,449 L162.5,455 M142.5,476 L148,470 M167.5,476 L162,470"/></g><circle cx="189.2" cy="467.1" r="18.8" fill="#3376cd"/><path d="M188.3,459.3 H192.3 V474.9 H188.3 V464.6 Q186.6,465.6 184.3,466 V462.4 Q187.2,461.5 188.6,459.3 Z" fill="#ffffff"/><path d="M192.6,560 V540 H144 V578 H164.5" stroke="#868686" stroke-width="3.3" fill="none" stroke-linejoin="round"/><path d="M153.6,585.2 H167.5" stroke="#868686" stroke-width="3.3" fill="none" stroke-linejoin="round"/><circle cx="183.3" cy="575.8" r="13.1" stroke="#868686" stroke-width="3.3" fill="none" stroke-linejoin="round"/><path d="M177.5,573.5 L182.3,578.2 L177.5,582.9 M190.5,570.2 L185.6,574.9 L190.5,579.5" stroke="#868686" stroke-width="2.6" fill="none"/><path d="M142.8,662.3 H163.6 V684.3 H185.6 V705.4 H142.8 Z M163.6,684.3 V705.4 M142.8,684.3 H163.6" stroke="#868686" stroke-width="3.3" fill="none" stroke-linejoin="round"/><rect x="174.9" y="650.8" width="21.9" height="22" rx="2" stroke="#868686" stroke-width="3.3" fill="none" stroke-linejoin="round"/><circle cx="169.6" cy="1167" r="27" stroke="#868686" stroke-width="3.3" fill="none" stroke-linejoin="round"/><circle cx="169.5" cy="1161.6" r="11.8" stroke="#868686" stroke-width="3.3" fill="none" stroke-linejoin="round"/><path d="M152.5,1187.5 C156,1177 162,1173.5 169.5,1173.5 C177,1173.5 183,1177 186.5,1187.5" stroke="#868686" stroke-width="3.3" fill="none" stroke-linejoin="round"/><path d="M163.15,1265.96 L165.11,1255.06 L173.89,1255.06 L175.85,1265.96 L175.85,1265.96 L184.95,1259.64 L191.16,1265.85 L184.84,1274.95 L184.84,1274.95 L195.74,1276.91 L195.74,1285.69 L184.84,1287.65 L184.84,1287.65 L191.16,1296.75 L184.95,1302.96 L175.85,1296.64 L175.85,1296.64 L173.89,1307.54 L165.11,1307.54 L163.15,1296.64 L163.15,1296.64 L154.05,1302.96 L147.84,1296.75 L154.16,1287.65 L154.16,1287.65 L143.26,1285.69 L143.26,1276.91 L154.16,1274.95 L154.16,1274.95 L147.84,1265.85 L154.05,1259.64 L163.15,1265.96 Z" stroke="#868686" stroke-width="3.3" fill="none" stroke-linejoin="miter"/><circle cx="169.5" cy="1281.3" r="5.95" stroke="#868686" stroke-width="4.2" fill="none"/><rect x="166.2" y="1285" width="44.5" height="37.7" rx="15.5" fill="#4d4d4d" stroke="#181818" stroke-width="4"/><path d="M656.5,190.5 L676,202.5 L656.5,214.5 Z" stroke="#99cf8c" stroke-width="3.3" fill="none" stroke-linejoin="round"/><path d="M965.5,197 L977,208.5 L988.5,197" stroke="#cccccc" stroke-width="2.6" fill="none"/><path d="M1042.12,192.19 L1043.56,186.61 L1048.64,186.61 L1050.08,192.19 L1050.08,192.19 L1055.04,189.26 L1058.64,192.86 L1055.71,197.82 L1055.71,197.82 L1061.29,199.26 L1061.29,204.34 L1055.71,205.78 L1055.71,205.78 L1058.64,210.74 L1055.04,214.34 L1050.08,211.41 L1050.08,211.41 L1048.64,216.99 L1043.56,216.99 L1042.12,211.41 L1042.12,211.41 L1037.16,214.34 L1033.56,210.74 L1036.49,205.78 L1036.49,205.78 L1030.91,204.34 L1030.91,199.26 L1036.49,197.82 L1036.49,197.82 L1033.56,192.86 L1037.16,189.26 L1042.12,192.19 Z" stroke="#cccccc" stroke-width="2.4" fill="none" stroke-linejoin="miter"/><circle cx="1046.1" cy="201.8" r="3.6" stroke="#cccccc" stroke-width="2.3" fill="none"/><circle cx="1091.7" cy="201.8" r="2.6" fill="#cccccc"/><circle cx="1103.7" cy="201.8" r="2.6" fill="#cccccc"/><circle cx="1115.6" cy="201.8" r="2.6" fill="#cccccc"/><path d="M240,265.5 L251,276.5 L262,265.5" stroke="#cccccc" stroke-width="2.4" fill="none"/><path d="M261.0,317.8 L272.0,328.8 L283.0,317.8" stroke="#cccccc" stroke-width="2.4" fill="none"/><path d="M285.7,365.0 L296.7,376.0 L285.7,387.0" stroke="#cccccc" stroke-width="2.4" fill="none"/><path d="M280.2,423.2 L291.2,434.2 L302.2,423.2" stroke="#cccccc" stroke-width="2.4" fill="none"/><path d="M299.4,475.9 L310.4,486.9 L321.4,475.9" stroke="#cccccc" stroke-width="2.4" fill="none"/><path d="M324.1,523.1 L335.1,534.1 L324.1,545.1" stroke="#cccccc" stroke-width="2.4" fill="none"/><path d="M324.1,575.8 L335.1,586.8 L324.1,597.8" stroke="#cccccc" stroke-width="2.4" fill="none"/><path d="M318.6,634.0 L329.6,645.0 L340.6,634.0" stroke="#cccccc" stroke-width="2.4" fill="none"/><path d="M337.8,686.7 L348.8,697.7 L359.8,686.7" stroke="#cccccc" stroke-width="2.4" fill="none"/><path d="M362.5,733.9000000000001 L373.5,744.9000000000001 L362.5,755.9000000000001" stroke="#cccccc" stroke-width="2.4" fill="none"/><path d="M362.5,786.6 L373.5,797.6 L362.5,808.6" stroke="#cccccc" stroke-width="2.4" fill="none"/><path d="M362.5,839.3 L373.5,850.3 L362.5,861.3" stroke="#cccccc" stroke-width="2.4" fill="none"/><path d="M362.5,892.0 L373.5,903.0 L362.5,914.0" stroke="#cccccc" stroke-width="2.4" fill="none"/><path d="M343.3,997.4000000000001 L354.3,1008.4000000000001 L343.3,1019.4000000000001" stroke="#cccccc" stroke-width="2.4" fill="none"/><path d="M324.1,1050.1 L335.1,1061.1 L324.1,1072.1" stroke="#cccccc" stroke-width="2.4" fill="none"/><path d="M1104.8,674.8 H1121.5 L1130.2,683.5 V705 H1104.8 Z" stroke="#cccccc" stroke-width="2.6" fill="none" stroke-linejoin="round"/><path d="M246.8,1145.8 L257.8,1156.8 L246.8,1167.8" stroke="#cccccc" stroke-width="2.4" fill="none"/><path d="M246.8,1197.8 L257.8,1208.8 L246.8,1219.8" stroke="#cccccc" stroke-width="2.4" fill="none"/><path d="M246.8,1250.8 L257.8,1261.8 L246.8,1272.8" stroke="#cccccc" stroke-width="2.4" fill="none"/><path d="M246.8,1303.8 L257.8,1314.8 L246.8,1325.8" stroke="#cccccc" stroke-width="2.4" fill="none"/><path d="M1212.59,193.94 A9.1,9.1 0 1 0 1212.59,207.45999999999998" stroke="#6398b7" stroke-width="5.8" fill="none"/><path d="M1205.0,200.39999999999998 H1211.0 M1208.0,197.39999999999998 V203.39999999999998" stroke="#6398b7" stroke-width="2.3" fill="none"/><path d="M1212.8,200.39999999999998 H1220.8 M1216.8,196.39999999999998 V204.39999999999998" stroke="#6398b7" stroke-width="2.5" fill="none"/><rect x="2011.7" y="186.3" width="29" height="28.5" rx="3.5" stroke="#cccccc" stroke-width="2.3" fill="none"/><path d="M2026.2,186 V215" stroke="#cccccc" stroke-width="2.3"/><circle cx="2075.2" cy="201.7" r="2.6" fill="#cccccc"/><circle cx="2087.2" cy="201.7" r="2.6" fill="#cccccc"/><circle cx="2099.2" cy="201.7" r="2.6" fill="#cccccc"/><path d="M1226.8899999999999,261.94 A9.1,9.1 0 1 0 1226.8899999999999,275.46" stroke="#6398b7" stroke-width="5.8" fill="none"/><path d="M1219.3,268.4 H1225.3 M1222.3,265.4 V271.4" stroke="#6398b7" stroke-width="2.3" fill="none"/><path d="M1227.1,268.4 H1235.1 M1231.1,264.4 V272.4" stroke="#6398b7" stroke-width="2.5" fill="none"/><path d="M1622.5,259.5 L1633,270 L1622.5,280.5" stroke="#a3a3a3" stroke-width="2.3" fill="none"/><path d="M1665,255.5 L1678,262.5 V277 L1665,284 L1652,277 V262.5 Z M1652,262.5 L1665,269.5 L1678,262.5 M1665,269.5 V284" stroke="#a985d3" stroke-width="2.4" fill="none" stroke-linejoin="round"/><circle cx="1535.6" cy="534" r="9.4" fill="#737067"/><circle cx="1614.6" cy="534" r="9.4" fill="#d2331f"/><circle cx="1840" cy="534" r="9.4" fill="#737067"/><path d="M1637,521.5 H1651 L1661.5,534 L1651,546.5 H1637 Z" stroke="#f7ce46" stroke-width="3" fill="none" stroke-linejoin="round"/><path d="M1169,520.6 H1183.5 L1194.2,533.7 L1183.5,546.8 H1169 Z" stroke="#f7ce46" stroke-width="3" fill="none" stroke-linejoin="round"/><circle cx="1179.7" cy="534" r="5" fill="#d2331f"/><g stroke="#ffffff" stroke-width="2.6" fill="none" stroke-linejoin="round" stroke-linecap="butt"><path d="M159.6,1363.7 V1355 L177.3,1366.9 L167.2,1373.8"/><path d="M153.6,1372.3 C153.6,1369.2 155,1367.5 156.7,1367.5 C158.4,1367.5 159.8,1369.2 159.8,1372.3"/><path d="M153,1372.3 H160.4 V1377.3 C160.4,1379.9 158.8,1381.5 156.7,1381.5 C154.6,1381.5 153,1379.9 153,1377.3 Z"/><path d="M148,1375.4 H152.8 M160.6,1375.4 H165.4 M148.6,1369.3 L152.8,1372.6 M164.8,1369.3 L160.6,1372.6 M148.6,1382.3 L152.6,1379 M164.8,1382.3 L160.8,1379"/></g><g stroke="#d8d8d8" stroke-width="2.4" fill="none"><circle cx="1358.5" cy="1363" r="10.5"/><path d="M1366,1370.5 L1376.5,1381 M1353,1363 H1364 M1358.5,1357.5 V1368.5"/></g><path d="M2081,1372 V1361.5 a8.5,8.5 0 0 1 17,0 V1372 L2100.5,1375.5 H2078.5 Z M2086,1376 a3.5,3.5 0 0 0 7,0" stroke="#ffffff" stroke-width="2.4" fill="none" stroke-linejoin="round"/></svg>
<div style="position:absolute;left:175.8px;top:1289.55px;font-family:'Liberation Sans', sans-serif;font-size:23px;line-height:28.75px;font-weight:700;color:#ffffff;letter-spacing:-1.0px;white-space:pre;-webkit-text-stroke:0.25px currentColor;">LL</div>
<div style="position:absolute;left:1453.3px;top:163.4px;width:461.7px;height:61.6px;border-radius:12px;background:#181818;border:2px solid #303030;box-shadow:0 4px 18px rgba(0,0,0,0.55)"></div>
<svg style="position:absolute;left:0;top:0" width="2256" height="1542" viewBox="0 0 2256 1542"><rect x="1483.4" y="182.6" width="5.2" height="5.2" fill="#868686"/><rect x="1483.4" y="192.6" width="5.2" height="5.2" fill="#868686"/><rect x="1483.4" y="202.6" width="5.2" height="5.2" fill="#868686"/><rect x="1493.4" y="182.6" width="5.2" height="5.2" fill="#868686"/><rect x="1493.4" y="192.6" width="5.2" height="5.2" fill="#868686"/><rect x="1493.4" y="202.6" width="5.2" height="5.2" fill="#868686"/><path d="M1525,180.5 V208.6" stroke="#86bcf9" stroke-width="4" fill="none"/><path d="M1534.5,182 L1550,194.5 L1534.5,207 Z" stroke="#86bcf9" stroke-width="3.3" fill="none" stroke-linejoin="miter"/><path d="M1586,194.5 A12.8,12.8 0 0 1 1609.8,188.3" stroke="#86bcf9" stroke-width="3.3" fill="none"/><path d="M1613.3,180 V192.3 H1601.5" stroke="#86bcf9" stroke-width="3.3" fill="none"/><circle cx="1599" cy="204.2" r="4.8" fill="#86bcf9"/><path d="M1661.2,178 V198 M1651.3,188.5 L1661.2,198.3 L1671.1,188.5" stroke="#86bcf9" stroke-width="3.3" fill="none"/><circle cx="1661.2" cy="206.7" r="4.9" fill="#86bcf9"/><path d="M1723.7,198.3 V180 M1714,189.2 L1723.7,179.5 L1733.4,189.2" stroke="#86bcf9" stroke-width="3.3" fill="none"/><circle cx="1723.7" cy="206.7" r="4.9" fill="#86bcf9"/><path d="M1773.3,181 V193 H1785" stroke="#99cf8c" stroke-width="3.3" fill="none"/><path d="M1777.5,185.5 A13,13 0 1 1 1773.8,198" stroke="#99cf8c" stroke-width="3.3" fill="none"/><rect x="1835.7" y="181.7" width="25.5" height="25.5" rx="3" stroke="#e58c77" stroke-width="3.3" fill="none"/><path d="M1878.5,190.8 L1886.6,199.5 L1894.7,190.8" stroke="#cccccc" stroke-width="2.3" fill="none"/></svg>
</div>
<div style="position:absolute;left:112px;top:76px;width:2030px;height:1266px;border:1px solid #343434;border-bottom:none;border-top-color:#a8a8a8;border-radius:18px 18px 0 0;pointer-events:none"></div>
<div style="position:absolute;left:125px;top:77px;width:2006px;height:1px;background:#3c3c3c"></div>
</body></html>
